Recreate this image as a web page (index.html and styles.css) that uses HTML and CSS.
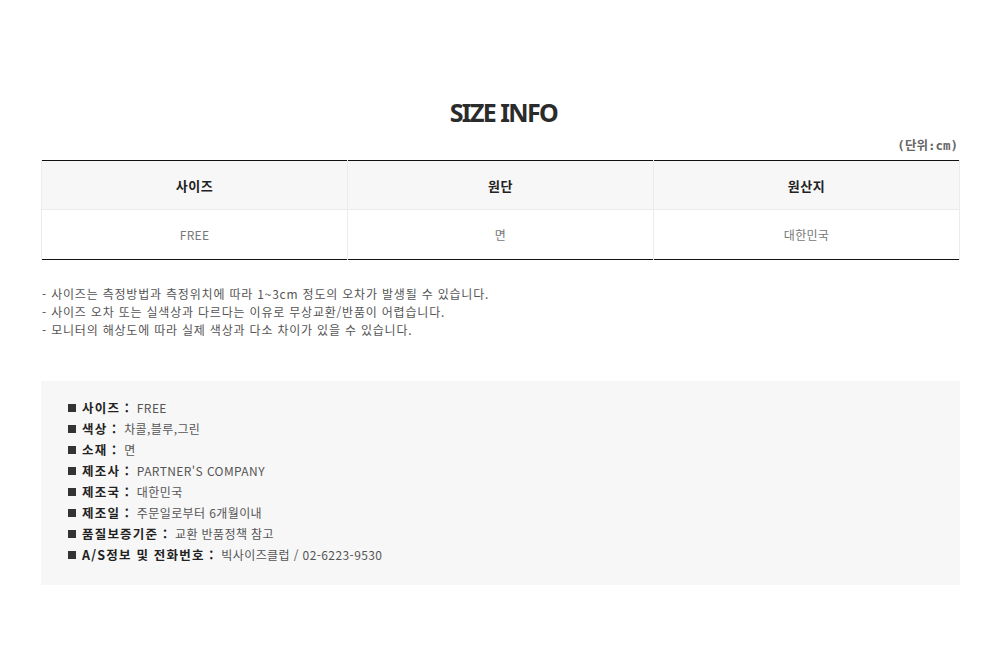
FILE: index.html
```html
<!DOCTYPE html>
<html lang="ko">
<head>
<meta charset="utf-8">
<link rel="stylesheet" href="styles.css">
</head>
<body>
<div class="wrap">
  <h1 class="title">SIZE INFO</h1>
  <div class="unit">(단위:cm)</div>
  <table class="size-table">
    <thead>
      <tr><th>사이즈</th><th>원단</th><th>원산지</th></tr>
    </thead>
    <tbody>
      <tr><td>FREE</td><td>면</td><td>대한민국</td></tr>
    </tbody>
  </table>
  <ul class="notes">
    <li>- 사이즈는 측정방법과 측정위치에 따라 1~3cm 정도의 오차가 발생될 수 있습니다.</li>
    <li>- 사이즈 오차 또는 실색상과 다르다는 이유로 무상교환/반품이 어렵습니다.</li>
    <li>- 모니터의 해상도에 따라 실제 색상과 다소 차이가 있을 수 있습니다.</li>
  </ul>
  <div class="info-box">
    <ul class="info">
      <li><span class="sq"></span><b>사이즈 :</b> FREE</li>
      <li><span class="sq"></span><b>색상 :</b> 차콜,블루,그린</li>
      <li><span class="sq"></span><b>소재 :</b> 면</li>
      <li><span class="sq"></span><b>제조사 :</b> PARTNER'S COMPANY</li>
      <li><span class="sq"></span><b>제조국 :</b> 대한민국</li>
      <li><span class="sq"></span><b>제조일 :</b> 주문일로부터 6개월이내</li>
      <li><span class="sq"></span><b>품질보증기준 :</b> 교환 반품정책 참고</li>
      <li><span class="sq"></span><b>A/S정보 및 전화번호 :</b> 빅사이즈클럽 / 02-6223-9530</li>
    </ul>
  </div>
</div>
</body>
</html>
```

FILE: styles.css
```css
html, body {
  margin: 0;
  padding: 0;
  background: #fff;
}
body {
  font-family: "Noto Sans CJK KR", "Noto Sans", sans-serif;
  color: #333;
}
.wrap {
  width: 919px;
  margin-left: 41px;
  padding-top: 93px;
}
.title {
  margin: 0;
  text-align: center;
  font-family: "Noto Sans", "Noto Sans CJK KR", sans-serif;
  font-weight: 700;
  font-size: 25px;
  line-height: 38px;
  letter-spacing: -1.6px;
  color: #2b2b2b;
  padding-left: 6px;
}
.unit {
  text-align: right;
  margin-top: 6px;
  padding-right: 2px;
  font-family: "DejaVu Sans Mono", "Noto Sans CJK KR", monospace;
  font-size: 12.5px;
  font-weight: 700;
  line-height: 18px;
  color: #666;
}
.size-table {
  width: 919px;
  margin-top: 5px;
  border-collapse: collapse;
  table-layout: fixed;
  border-top: 1px solid #111;
  border-bottom: 1px solid #111;
}
.size-table th,
.size-table td {
  padding: 0;
  text-align: center;
  border-left: 1px solid #ececec;
  border-right: 1px solid #ececec;
}
.size-table th {
  height: 48px;
  background: #f7f7f7;
  font-size: 13px;
  font-weight: 700;
  color: #222;
  letter-spacing: 0.5px;
  border-bottom: 1px solid #eaeaea;
}
.size-table td {
  height: 49px;
  font-size: 12px;
  color: #777;
  letter-spacing: 0.3px;
}
.notes {
  list-style: none;
  margin: 0;
  padding: 25px 0 0 1px;
}
.notes li {
  font-size: 12px;
  line-height: 18px;
  color: #555;
  letter-spacing: 0.8px;
}
.info-box {
  margin-top: 42px;
  background: #f7f7f7;
  padding: 16px 0 20px 27px;
}
.info {
  list-style: none;
  margin: 0;
  padding: 0;
}
.info li {
  display: flex;
  align-items: center;
  font-size: 12px;
  line-height: 21px;
  color: #555;
  white-space: pre;
  letter-spacing: 0.4px;
}
.info b {
  color: #222;
  font-weight: 700;
  font-size: 12.5px;
  letter-spacing: 1.2px;
  margin-right: 3px;
}
.sq {
  display: inline-block;
  width: 8px;
  height: 8px;
  background: #333;
  margin-right: 6px;
}
```
